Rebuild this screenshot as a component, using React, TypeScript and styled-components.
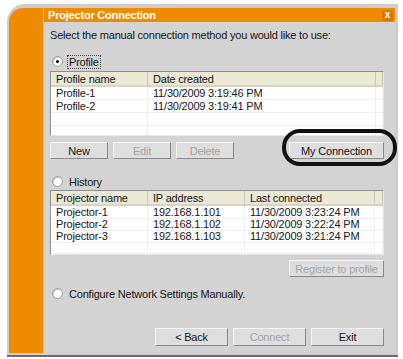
import styled, { createGlobalStyle } from "styled-components";

const GlobalStyle = createGlobalStyle`
  html, body { margin: 0; padding: 0; background: #ffffff; }
  body {
    font-family: "Liberation Sans", Arial, sans-serif;
    font-size: 11px;
    letter-spacing: -0.2px;
    color: #151515;
  }
`;

const ORANGE = "#ef8b00";

const Frame = styled.div`
  margin: 4px 0 0 7px;
  width: 391px;
  height: 353px;
  box-sizing: border-box;
  background: #cdcdcd;
  border-top-left-radius: 18px;
  border-bottom: 2px solid #6c6c6c;
  padding: 4px 3px 2px 2px;
  display: flex;
`;

const Band = styled.div`
  width: 34px;
  background: ${ORANGE};
  border-top-left-radius: 14px;
  border-right: 1px solid #f3b566;
`;

const Main = styled.div`
  flex: 1;
  display: flex;
  flex-direction: column;
  background: #d3d3d3;
`;

const TitleBar = styled.div`
  height: 14px;
  background: ${ORANGE};
  color: #fff;
  font-weight: bold;
  display: flex;
  align-items: center;
  justify-content: space-between;
  padding: 0 2px 0 4px;
`;

const Close = styled.div`
  width: 11px;
  height: 11px;
  background: #dc7700;
  color: #fff;
  font-size: 10px;
  line-height: 10px;
  text-align: center;
  font-weight: bold;
`;

const Content = styled.div`
  flex: 1;
  display: flex;
  flex-direction: column;
  padding: 0 11px 0 6px;
`;

const Intro = styled.div<{ $top: number }>`
  margin-top: ${(p) => p.$top}px;
  line-height: 13px;
`;

const RadioRow = styled.label<{ $top: number }>`
  margin-top: ${(p) => p.$top}px;
  display: flex;
  align-items: center;
  gap: 4px;
  height: 13px;
  padding-left: 2px;
`;

const RadioDot = styled.span<{ $on?: boolean }>`
  width: 9px;
  height: 9px;
  border-radius: 50%;
  background: #fff;
  border: 1px solid #9a9a9a;
  box-shadow: inset 1px 1px 0 #c8c8c8;
  display: flex;
  align-items: center;
  justify-content: center;
  &::after {
    content: "";
    width: 3px;
    height: 3px;
    border-radius: 50%;
    background: ${(p) => (p.$on ? "#000" : "transparent")};
  }
`;

const RadioText = styled.span<{ $focus?: boolean }>`
  padding: 0 1px;
  line-height: 12px;
  border: 1px dotted ${(p) => (p.$focus ? "#444" : "transparent")};
`;

const ListBox = styled.div<{ $top: number; $height: number }>`
  margin-top: ${(p) => p.$top}px;
  height: ${(p) => p.$height}px;
  box-sizing: border-box;
  background: #fff;
  border: 1px solid #8f8f8f;
  border-right-color: #e8e8e8;
  border-bottom-color: #e8e8e8;
  overflow: hidden;
`;

const Row = styled.div<{ $cols: string; $h: number }>`
  display: grid;
  grid-template-columns: ${(p) => p.$cols};
  height: ${(p) => p.$h}px;
`;

const HeadCell = styled.div`
  background: #ebe8d6;
  border-right: 1px solid #c9c6b4;
  border-bottom: 2px solid #d8d4c0;
  padding-left: 5px;
  display: flex;
  align-items: center;
  white-space: nowrap;
`;

const Cell = styled.div`
  border-right: 1px solid #efefef;
  border-bottom: 1px solid #efefef;
  padding-left: 5px;
  display: flex;
  align-items: center;
  white-space: nowrap;
`;

const ButtonRow = styled.div<{ $top: number; $justify?: string }>`
  margin-top: ${(p) => p.$top}px;
  display: flex;
  gap: 5px;
  justify-content: ${(p) => p.$justify ?? "flex-start"};
`;

const Button = styled.button<{ $w: number; $h?: number }>`
  width: ${(p) => p.$w}px;
  height: ${(p) => p.$h ?? 17}px;
  box-sizing: border-box;
  font: inherit;
  letter-spacing: inherit;
  color: ${(p) => (p.disabled ? "#a3a3a3" : "#151515")};
  background: #dedede;
  border: 1px solid;
  border-color: #f4f4f4 #8a8a8a #8a8a8a #f4f4f4;
  padding: 0;
`;

const Spacer = styled.div`
  flex: 1;
`;

const Highlight = styled.div`
  position: relative;
  display: flex;
`;

const Oval = styled.div`
  position: absolute;
  left: -7px;
  right: -13px;
  top: -13px;
  bottom: -7px;
  border: 4px solid #111;
  border-radius: 18px;
  pointer-events: none;
`;

const profileCols = "97px 228px 1fr";
const historyCols = "97px 97px 130px 1fr";

const profiles = [
  ["Profile-1", "11/30/2009 3:19:46 PM"],
  ["Profile-2", "11/30/2009 3:19:41 PM"],
  ["", ""],
  ["", ""],
];

const history = [
  ["Projector-1", "192.168.1.101", "11/30/2009 3:23:24 PM"],
  ["Projector-2", "192.168.1.102", "11/30/2009 3:22:24 PM"],
  ["Projector-3", "192.168.1.103", "11/30/2009 3:21:24 PM"],
  ["", "", ""],
];

export default function App() {
  return (
    <>
      <GlobalStyle />
      <Frame>
        <Band />
        <Main>
          <TitleBar>
            <span>Projector Connection</span>
            <Close>x</Close>
          </TitleBar>
          <Content>
            <Intro $top={7}>Select the manual connection method you would like to use:</Intro>

            <RadioRow $top={13}>
              <RadioDot $on />
              <RadioText $focus>Profile</RadioText>
            </RadioRow>
            <ListBox $top={3} $height={65}>
              <Row $cols={profileCols} $h={15}>
                <HeadCell>Profile name</HeadCell>
                <HeadCell>Date created</HeadCell>
                <HeadCell />
              </Row>
              {profiles.map((r, i) => (
                <Row key={i} $cols={profileCols} $h={13}>
                  <Cell>{r[0]}</Cell>
                  <Cell>{r[1]}</Cell>
                  <Cell />
                </Row>
              ))}
            </ListBox>
            <ButtonRow $top={6}>
              <Button $w={58}>New</Button>
              <Button $w={58} disabled>Edit</Button>
              <Button $w={58} disabled>Delete</Button>
              <Spacer />
              <Highlight>
                <Button $w={95}>My Connection</Button>
                <Oval />
              </Highlight>
            </ButtonRow>

            <RadioRow $top={16}>
              <RadioDot />
              <RadioText>History</RadioText>
            </RadioRow>
            <ListBox $top={2} $height={65}>
              <Row $cols={historyCols} $h={15}>
                <HeadCell>Projector name</HeadCell>
                <HeadCell>IP address</HeadCell>
                <HeadCell>Last connected</HeadCell>
                <HeadCell />
              </Row>
              {history.map((r, i) => (
                <Row key={i} $cols={historyCols} $h={12}>
                  <Cell>{r[0]}</Cell>
                  <Cell>{r[1]}</Cell>
                  <Cell>{r[2]}</Cell>
                  <Cell />
                </Row>
              ))}
            </ListBox>
            <ButtonRow $top={5} $justify="flex-end">
              <Button $w={95} disabled>Register to profile</Button>
            </ButtonRow>

            <RadioRow $top={10}>
              <RadioDot />
              <RadioText>Configure Network Settings Manually.</RadioText>
            </RadioRow>

            <ButtonRow $top={28} $justify="flex-end">
              <Button $w={73} $h={18}>&lt; Back</Button>
              <Button $w={73} $h={18} disabled>Connect</Button>
              <Button $w={73} $h={18}>Exit</Button>
            </ButtonRow>
          </Content>
        </Main>
      </Frame>
    </>
  );
}
